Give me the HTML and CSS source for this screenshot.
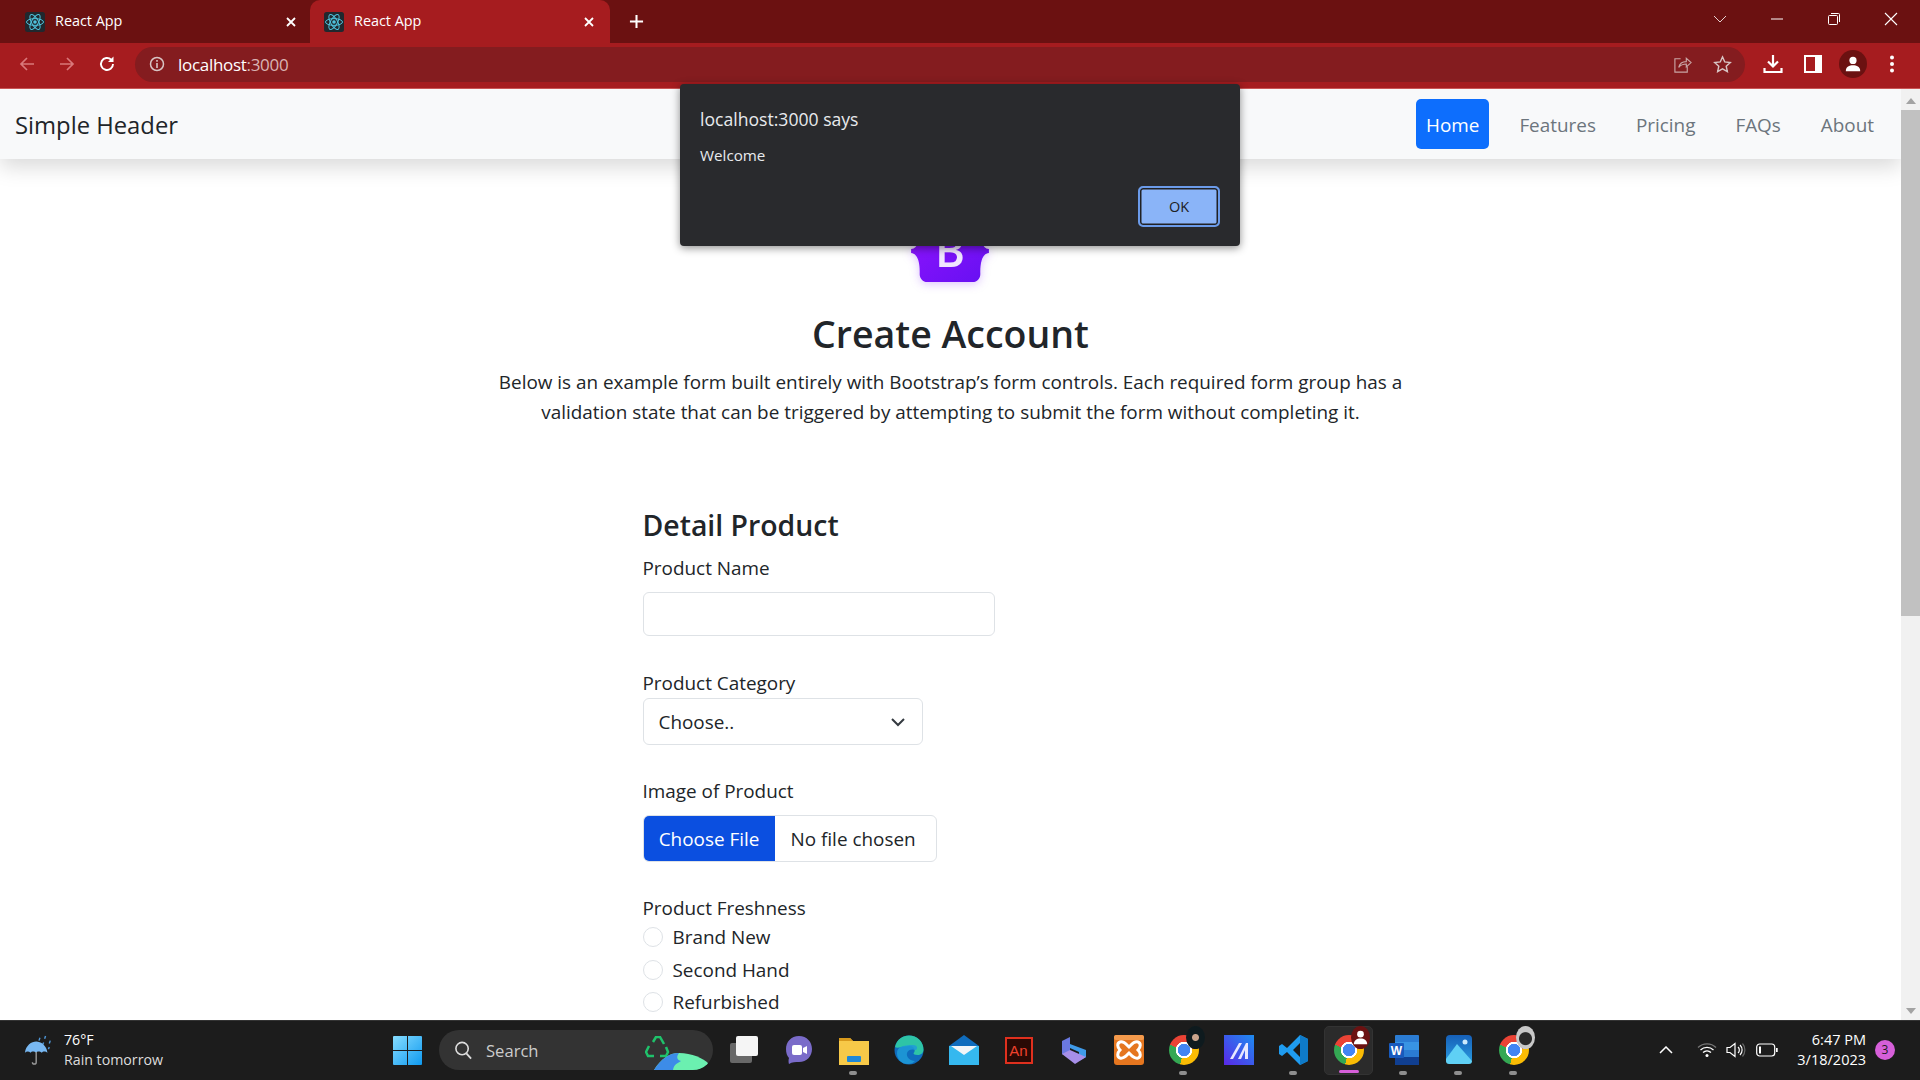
FILE: index.html
```html
<!DOCTYPE html>
<html lang="en">
<head>
    <meta charset="UTF-8">
    <title>React App</title>
    <link rel="stylesheet" href="styles.css">
</head>
<body>
<svg class="defs" width="0" height="0">
    <symbol id="react" viewBox="0 0 20 20">
        <rect width="20" height="20" rx="2.5" fill="#20282e"/>
        <g fill="none" stroke="#4fc3dc" stroke-width="1">
            <ellipse cx="10" cy="10" rx="8.5" ry="3.4"/>
            <ellipse cx="10" cy="10" rx="8.5" ry="3.4" transform="rotate(60 10 10)"/>
            <ellipse cx="10" cy="10" rx="8.5" ry="3.4" transform="rotate(120 10 10)"/>
        </g>
        <circle cx="10" cy="10" r="1.8" fill="#4fc3dc"/>
    </symbol>
    <symbol id="close-x" viewBox="0 0 12 12">
        <path d="M2 2l8 8M10 2l-8 8" stroke="#fff" stroke-width="1.8" fill="none"/>
    </symbol>
</svg>

<div class="tab-strip">
    <div class="tab">
        <svg class="favicon"><use href="#react"/></svg>
        <span class="tab-title">React App</span>
        <svg class="tab-close"><use href="#close-x"/></svg>
    </div>
    <div class="tab tab-active">
        <svg class="favicon"><use href="#react"/></svg>
        <span class="tab-title">React App</span>
        <svg class="tab-close"><use href="#close-x"/></svg>
    </div>
    <svg class="new-tab" viewBox="0 0 16 16"><path d="M8 1v14M1 8h14" stroke="#fff" stroke-width="2.2"/></svg>
    <div class="window-controls">
        <svg viewBox="0 0 14 14"><path d="M1 4l6 6 6-6" stroke="#e6d0d0" fill="none"/></svg>
        <svg viewBox="0 0 14 14"><path d="M1 7h12" stroke="#fff"/></svg>
        <svg viewBox="0 0 14 14"><path d="M1.5 4.5a1 1 0 0 1 1-1h7a1 1 0 0 1 1 1v7a1 1 0 0 1-1 1h-7a1 1 0 0 1-1-1zM4 1.5h7.500a1 1 0 0 1 1 1V10" stroke="#fff" fill="none"/></svg>
        <svg viewBox="0 0 14 14"><path d="M1 1l12 12M13 1L1 13" stroke="#fff" stroke-width="1.100"/></svg>
    </div>
</div>

<div class="toolbar">
    <div class="nav-icons">
        <svg viewBox="0 0 18 18"><path d="M16 9H3M9 3L3 9l6 6" stroke="#d9787a" stroke-width="1.700" fill="none"/></svg>
        <svg viewBox="0 0 18 18"><path d="M2 9h13M9 3l6 6-6 6" stroke="#d9787a" stroke-width="1.700" fill="none"/></svg>
        <svg viewBox="0 0 18 18"><path d="M15 9a6 6 0 1 1-1.800-4.300" stroke="#fff" stroke-width="1.900" fill="none"/><path d="M15.500 1.500v5.500H10z" fill="#fff"/></svg>
    </div>
    <div class="address-bar">
        <svg class="info-icon" viewBox="0 0 16 16"><circle cx="8" cy="8" r="6.500" stroke="#d8c4c4" stroke-width="1.500" fill="none"/><path d="M8 7v5M8 4v1.700" stroke="#d8c4c4" stroke-width="1.600"/></svg>
        <span class="url">localhost<span class="url-port">:3000</span></span>
        <div class="address-actions">
            <svg viewBox="0 0 20 20"><path d="M8 4H2v14h13v-6" stroke="#c9a5a5" stroke-width="1.200" fill="none"/><path d="M6 13c1-4 4-6 8-6V3.500l5 4.500-5 4.500V9.500c-3 0-6 1-8 3.500z" stroke="#c9a5a5" stroke-width="1.200" fill="#841c1f"/></svg>
            <svg viewBox="0 0 20 20"><path d="M10 2l2.400 5.300 5.800.6-4.300 3.900 1.200 5.700L10 14.600l-5.100 2.900 1.200-5.700L1.800 7.900l5.800-.6z" stroke="#d8c4c4" stroke-width="1.500" fill="none"/></svg>
        </div>
    </div>
    <div class="toolbar-icons">
        <svg viewBox="0 0 20 20"><path d="M10 1v11M5 7.500l5 5 5-5" stroke="#fff" stroke-width="2.200" fill="none"/><path d="M1.500 14v4h17v-4" stroke="#fff" stroke-width="2.200" fill="none"/></svg>
        <svg viewBox="0 0 20 20"><rect x="1" y="1" width="18" height="18" fill="#fff"/><rect x="3" y="3" width="9" height="14" fill="#a61c1f"/></svg>
        <div class="avatar">
            <svg viewBox="0 0 20 20"><circle cx="10" cy="6" r="4" fill="#fff"/><path d="M2 18c0-5 4-6.500 8-6.500s8 1.500 8 6.500z" fill="#fff"/></svg>
        </div>
        <svg class="menu-dots" viewBox="0 0 20 20"><circle cx="10" cy="3.500" r="2" fill="#fff"/><circle cx="10" cy="10" r="2" fill="#fff"/><circle cx="10" cy="16.500" r="2" fill="#fff"/></svg>
    </div>
</div>

<div class="viewport">
    <div class="page">
        <nav class="navbar">
            <span class="brand">Simple Header</span>
            <ul class="nav-links">
                <li class="nav-link nav-link-active">Home</li>
                <li class="nav-link">Features</li>
                <li class="nav-link">Pricing</li>
                <li class="nav-link">FAQs</li>
                <li class="nav-link">About</li>
            </ul>
        </nav>

        <header class="hero">
            <svg class="logo" viewBox="0 0 512 408">
                <defs>
                    <linearGradient id="logo-fill" x1="0" y1="0" x2="1" y2="1">
                        <stop offset="0" stop-color="#9013fe"/>
                        <stop offset="1" stop-color="#6610f2"/>
                    </linearGradient>
                </defs>
                <path fill="url(#logo-fill)" d="M106.300 0C77.100 0 55.500 25.600 56.500 53.300c.9 26.600-.3 61.100-9 89.300C38.800 170.800 24.200 188.600 0 190.900v25.900c24.200 2.300 38.800 20.200 47.500 48.300 8.700 28.100 9.900 62.600 9 89.300-1 27.700 20.600 53.300 49.800 53.300h299.400c29.200 0 50.800-25.600 49.800-53.300-.9-26.700.3-61.200 9-89.300 8.700-28.100 23.300-46 47.500-48.300v-25.900c-24.200-2.300-38.800-20.100-47.500-48.300-8.700-28.200-9.900-62.700-9-89.300C456.500 25.600 434.900 0 405.700 0z"/>
                <text class="logo-letter" x="256" y="312" text-anchor="middle">B</text>
            </svg>
            <h1 class="hero-title">Create Account</h1>
            <p class="hero-text">Below is an example form built entirely with Bootstrap’s form controls. Each required form group has a validation state that can be triggered by attempting to submit the form without completing it.</p>
        </header>

        <form class="product-form">
            <h2 class="form-title">Detail Product</h2>

            <label class="form-label">Product Name</label>
            <div class="form-input"></div>

            <label class="form-label label-category">Product Category</label>
            <div class="form-select">
                <span>Choose..</span>
                <svg viewBox="0 0 16 16"><path d="M2 5l6 6 6-6" stroke="#343a40" stroke-width="2" fill="none"/></svg>
            </div>

            <label class="form-label label-image">Image of Product</label>
            <div class="form-file">
                <span class="file-button">Choose File</span>
                <span class="file-name">No file chosen</span>
            </div>

            <label class="form-label label-fresh">Product Freshness</label>
            <div class="radio-row"><span class="radio"></span><span>Brand New</span></div>
            <div class="radio-row"><span class="radio"></span><span>Second Hand</span></div>
            <div class="radio-row"><span class="radio"></span><span>Refurbished</span></div>
        </form>
    </div>

    <div class="scrollbar">
        <svg class="scroll-arrow" viewBox="0 0 10 6"><path d="M5 0l5 6H0z"/></svg>
        <div class="scroll-track"><div class="scroll-thumb"></div></div>
        <svg class="scroll-arrow" viewBox="0 0 10 6"><path d="M5 6L0 0h10z"/></svg>
    </div>

    <div class="alert-box">
        <div class="alert-title">localhost:3000 says</div>
        <div class="alert-text">Welcome</div>
        <div class="alert-actions"><span class="alert-ok">OK</span></div>
    </div>
</div>

<div class="taskbar">
    <div class="weather">
        <svg viewBox="0 0 32 36">
            <path d="M17 5l-1 3M23 3l-1 3M28 8l-1 3M21 10l-1 2M27 15l-1 2" stroke="#4f97d8" stroke-width="1.500"/>
            <path d="M1 21C2 13 8 9 13 9s11 4 12 12c-2-2-5-2-6 0-2-2-5-2-6 0-2-2-5-2-6 0-2-2-4-2-6 0z" fill="#78b8f2"/>
            <path d="M13 20v11a2 2 0 0 1-4 0" stroke="#9a9a9a" stroke-width="1.500" fill="none"/>
        </svg>
        <div class="weather-text">
            <div class="weather-temp">76°F</div>
            <div>Rain tomorrow</div>
        </div>
    </div>

    <div class="start-item">
        <svg class="start-icon" viewBox="0 0 29 29">
            <defs>
                <linearGradient id="win-fill" x1="0" y1="0" x2="1" y2="1">
                    <stop offset="0" stop-color="#86dcff"/>
                    <stop offset="1" stop-color="#0f9af0"/>
                </linearGradient>
            </defs>
            <path fill="url(#win-fill)" d="M0 1a1 1 0 0 1 1-1h13v14H0zM15 0h13a1 1 0 0 1 1 1v13H15zM0 15h14v14H1a1 1 0 0 1-1-1zM15 15h14v13a1 1 0 0 1-1 1H15z"/>
        </svg>
    </div>

    <div class="search-box">
        <svg class="search-glass" viewBox="0 0 20 20"><circle cx="8.500" cy="8.500" r="6.500" stroke="#ddd" stroke-width="1.700" fill="none"/><path d="M13 13.500l5 5.500" stroke="#ddd" stroke-width="1.900"/></svg>
        <span class="search-label">Search</span>
        <svg class="search-art" viewBox="0 0 64 34">
            <path d="M8 6l3-5 4 0 4 7M21 11l2 5-2 4h-6M9 20H3l-2-4 3-6" fill="none" stroke="#1fc26b" stroke-width="2.500"/>
            <path d="M9 34C16 23 24 17 34 17c13 0 24 5 30 11l-9 6z" fill="#6bf0b0"/>
            <path d="M9 34C16 23 24 17 34 17c-3 4-2 7 2 8-3 2-7 3-8 9z" fill="#3d8ce8"/>
        </svg>
    </div>

    <div class="task-items">
        <div class="task-item">
            <svg viewBox="0 0 30 30"><rect x="1" y="8" width="22" height="20" rx="2" fill="#a8a8a8" opacity=".55"/><rect x="7" y="1" width="22" height="20" rx="2" fill="#f5f5f5"/></svg>
        </div>
        <div class="task-item">
            <svg viewBox="0 0 30 30"><path d="M15 1c8 0 13 6 13 13s-5 13-13 13c-3 0-7 0-10 2 0 0-1-3 0-6-2-2-3-5-3-9C2 7 7 1 15 1z" fill="#7a6bc9"/><rect x="8" y="10" width="10" height="10" rx="2" fill="#fff"/><path d="M19 13l4-2v8l-4-2z" fill="#fff"/></svg>
        </div>
        <div class="task-item task-running">
            <svg viewBox="0 0 30 30"><path d="M0 3h11l3 3h16v24H0z" fill="#f7c948"/><path d="M0 3h11l3 3H0z" fill="#d99a1c"/><rect x="8" y="21" width="14" height="6" rx="1" fill="#1e88d8"/></svg>
        </div>
        <div class="task-item">
            <svg viewBox="0 0 30 30">
                <circle cx="15" cy="15" r="14.500" fill="#0f6cbd"/>
                <path d="M1 12C3 4 9 .500 15 .500c8 0 14.500 6 14.500 14 0 3-2 5.500-6 5.500-3 0-4-1-4-2 2-1 2-7-4-7-7 0-12 3-14.500 1z" fill="#2ec4a6"/>
                <path d="M19 10c4 0 5 3 3 5-3-1-8-1-9 3-1 4 3 8 8 8-2 2-4 3-7 3C7 29 3 24 3 18s6-8 16-8z" fill="#1f9bd8" opacity=".85"/>
            </svg>
        </div>
        <div class="task-item">
            <svg viewBox="0 0 30 30"><path d="M15 0l15 11v19H0V11z" fill="#0f6cbd"/><rect y="11" width="30" height="19" fill="#35b8ef"/><path d="M2 11h26L15 20z" fill="#f1f5f8"/></svg>
        </div>
        <div class="task-item">
            <div class="an-icon">An</div>
        </div>
        <div class="task-item">
            <svg viewBox="0 0 30 30"><path d="M3 6l8-4v21l-8-4z" fill="#6a78e0"/><path d="M11 9l16 6v7l-7 4v-9l-9-4z" fill="#3f9ae8"/><path d="M3 19l8-4 16 7-11 7z" fill="#a78fe8"/></svg>
        </div>
        <div class="task-item">
            <svg viewBox="0 0 30 30"><rect width="30" height="30" rx="3" fill="#e5761f"/><rect width="30" height="5" rx="2" fill="#f49a4c"/><path d="M6 7c4-1 6 2 9 5 3-3 5-6 9-5 3 1 3 5 0 8 3 3 3 7 0 8-4 1-6-2-9-5-3 3-5 6-9 5-3-1-3-5 0-8-3-3-3-7 0-8z" fill="none" stroke="#fff" stroke-width="3"/></svg>
        </div>
        <div class="task-item task-running">
            <div class="chrome"><span class="chrome-badge badge-dark"></span></div>
        </div>
        <div class="task-item">
            <svg viewBox="0 0 30 30"><defs><linearGradient id="m-fill" x1="1" y1="0" x2="0" y2="1"><stop offset="0" stop-color="#1d8cf0"/><stop offset="1" stop-color="#5a28e8"/></linearGradient></defs><rect width="30" height="30" fill="url(#m-fill)"/><path d="M6 24L15 8h3L9 24zM14 24l8-16h2v16h-3v-9l-4 9z" fill="#e8e8ff"/></svg>
        </div>
        <div class="task-item task-running">
            <svg viewBox="0 0 30 30"><path d="M21 0l8 4v22l-8 4L8 17 3 21l-3-2v-8l3-2 5 4zM21 8l-7 7 7 7z" fill="#1f9cf0"/><path d="M21 0l8 4v22l-8 4z" fill="#0e7ac8"/></svg>
        </div>
        <div class="task-item task-active">
            <div class="chrome"><span class="chrome-badge badge-red"><svg viewBox="0 0 20 20"><circle cx="10" cy="6.500" r="3.500" fill="#fff"/><path d="M3 17c0-4 3-6 7-6s7 2 7 6z" fill="#fff"/></svg></span></div>
        </div>
        <div class="task-item task-running">
            <svg viewBox="0 0 30 30"><rect x="6" width="24" height="30" rx="1" fill="#2b7cd3"/><rect x="6" y="7" width="24" height="8" fill="#41a5ee" opacity=".6"/><rect x="6" y="22" width="24" height="8" fill="#103f91"/><rect y="8" width="15" height="15" rx="1" fill="#185abd"/><text class="word-letter" x="7.500" y="20" text-anchor="middle">W</text></svg>
        </div>
        <div class="task-item task-running">
            <svg viewBox="0 0 30 30"><defs><linearGradient id="ph-fill" x1="0" y1="0" x2="0" y2="1"><stop offset="0" stop-color="#1660b8"/><stop offset="1" stop-color="#2a9be0"/></linearGradient></defs><rect x="2" width="26" height="28" rx="4" fill="url(#ph-fill)"/><circle cx="21" cy="7" r="2.500" fill="#cdeafc"/><path d="M2 24L13 9l15 17v0a3 3 0 0 1-3 3H5a3 3 0 0 1-3-3z" fill="#5fd0f5"/></svg>
        </div>
        <div class="task-item task-running">
            <div class="chrome"><span class="chrome-badge badge-grey"></span></div>
        </div>
    </div>

    <div class="tray">
        <svg class="tray-chevron" viewBox="0 0 14 8"><path d="M1 7l6-6 6 6" stroke="#fff" stroke-width="1.500" fill="none"/></svg>
        <svg class="tray-wifi" viewBox="0 0 20 16"><path d="M1 5.500a13 13 0 0 1 18 0" stroke="#777" stroke-width="1.300" fill="none"/><path d="M3.500 8a9.500 9.500 0 0 1 13 0M6 10.500a6 6 0 0 1 8 0" stroke="#fff" stroke-width="1.300" fill="none"/><circle cx="10" cy="13.500" r="1.500" fill="#fff"/></svg>
        <svg class="tray-sound" viewBox="0 0 20 16"><path d="M1 5.500h3L9 1.500v13l-5-4H1z" stroke="#fff" stroke-width="1.200" fill="none"/><path d="M12 5a4 4 0 0 1 0 6M14 3a7 7 0 0 1 0 10" stroke="#fff" stroke-width="1.200" fill="none"/><path d="M16.500 1.500a10 10 0 0 1 0 13" stroke="#666" stroke-width="1.200" fill="none"/></svg>
        <svg class="tray-battery" viewBox="0 0 22 14"><rect x=".700" y="1" width="18" height="12" rx="3" stroke="#fff" stroke-width="1.200" fill="none"/><rect x="3" y="3.500" width="2" height="7" fill="#fff"/><rect x="20" y="5" width="1.700" height="4" fill="#fff"/></svg>
        <div class="clock">
            <div>6:47 PM</div>
            <div>3/18/2023</div>
        </div>
        <span class="notify-badge">3</span>
    </div>
</div>
</body>
</html>
```

FILE: styles.css
```css
* {
    box-sizing: border-box;
}
html, body {
    margin: 0;
    height: 100%;
    overflow: hidden;
}
body {
    display: flex;
    flex-direction: column;
    height: 1080px;
    font-family: "Open Sans", "Liberation Sans", sans-serif;
    color: #212529;
    background: #fff;
}
.defs {
    display: block;
    height: 0;
}

/* browser chrome */
.tab-strip {
    display: flex;
    align-items: center;
    height: 43px;
    background: #6b1111;
    padding-left: 10px;
    color: #fff;
}
.tab {
    display: flex;
    align-items: center;
    width: 299px;
    height: 43px;
    padding: 0 12px 0 15px;
    flex: none;
}
.tab-active {
    width: 300px;
    background: #a61c1f;
    border-radius: 10px 10px 0 0;
    padding: 0 15px 0 14px;
    margin-left: 1px;
}
.favicon {
    width: 20px;
    height: 20px;
    flex: none;
}
.tab-title {
    font-size: 14.400px;
    margin: -3px 0 0 10px;
    flex: 1;
}
.tab-close {
    width: 12px;
    height: 12px;
    flex: none;
}
.new-tab {
    width: 15px;
    height: 15px;
    margin-left: 19px;
}
.window-controls {
    display: flex;
    align-items: center;
    gap: 43px;
    margin-left: auto;
    margin-right: 22px;
    margin-top: -6px;
}
.window-controls svg {
    width: 14px;
    height: 14px;
}

.toolbar {
    display: flex;
    align-items: center;
    height: 46px;
    background: #a61c1f;
    border-bottom: 1px solid #c95555;
    padding-left: 18px;
    padding-bottom: 3px;
}
.nav-icons {
    display: flex;
    gap: 22px;
    width: 117px;
}
.nav-icons svg {
    width: 18px;
    height: 18px;
}
.address-bar {
    display: flex;
    align-items: center;
    width: 1610px;
    height: 35px;
    background: #841c1f;
    border-radius: 18px;
    padding-left: 14px;
    color: #fff;
}
.info-icon {
    width: 16px;
    height: 16px;
}
.url {
    font-size: 17px;
    margin-left: 13px;
    letter-spacing: -0.3px;
}
.url-port {
    color: #d9b3b3;
}
.address-actions {
    display: flex;
    align-items: center;
    gap: 21px;
    margin-left: auto;
    margin-right: 13px;
}
.address-actions svg {
    width: 19px;
    height: 19px;
}
.toolbar-icons {
    display: flex;
    align-items: center;
    gap: 20px;
    margin-left: 18px;
}
.toolbar-icons > svg {
    width: 20px;
    height: 20px;
}
.toolbar-icons .menu-dots {
    margin-left: -1px;
}
.avatar {
    display: flex;
    align-items: center;
    justify-content: center;
    width: 28px;
    height: 28px;
    margin: 0 -4px;
    border-radius: 50%;
    background: #6b1111;
}
.avatar svg {
    width: 18px;
    height: 18px;
}

/* page */
.viewport {
    position: relative;
    display: flex;
    height: 931px;
}
.page {
    flex: 1;
    overflow: hidden;
}
.navbar {
    display: flex;
    align-items: center;
    justify-content: space-between;
    height: 70px;
    padding: 0 17px 0 15px;
    background: #f8f9fa;
    box-shadow: 0 8px 20px rgba(0, 0, 0, 0.15);
}
.brand {
    font-size: 23.800px;
    padding-top: 1px;
}
.nav-links {
    display: flex;
    gap: 20px;
    list-style: none;
    margin: 0;
    padding: 0;
}
.nav-link {
    display: flex;
    align-items: center;
    height: 50px;
    padding: 1px 10px 0;
    font-size: 18.900px;
    color: #6c757d;
    border-radius: 5px;
}
.nav-link-active {
    background: #0d6efd;
    color: #fff;
}
.hero {
    display: flex;
    flex-direction: column;
    align-items: center;
    padding-top: 61px;
}
.logo {
    width: 78px;
    height: 62px;
    margin-right: 2px;
    filter: drop-shadow(0 2px 5px rgba(116, 16, 247, 0.25));
}
.logo-letter {
    font-size: 300px;
    font-weight: 600;
    fill: #f0e6ff;
}
.hero-title {
    margin: 28px 0 9px;
    font-size: 37.500px;
    font-weight: 600;
    line-height: 48px;
}
.hero-text {
    width: 920px;
    margin: 0;
    font-size: 18.900px;
    line-height: 30px;
    text-align: center;
}
.product-form {
    display: flex;
    flex-direction: column;
    align-items: flex-start;
    width: 616px;
    margin: 80px auto 0;
    font-size: 18.900px;
    line-height: 30px;
}
.form-title {
    margin: 0 0 10px;
    font-size: 28.400px;
    font-weight: 600;
    line-height: 36px;
}
.form-label {
    display: block;
}
.form-input {
    width: 352px;
    height: 44px;
    margin-top: 9px;
    border: 1px solid #dee2e6;
    border-radius: 6px;
}
.label-category {
    margin-top: 32px;
}
.form-select {
    display: flex;
    align-items: center;
    justify-content: space-between;
    width: 280px;
    height: 47px;
    padding: 0 16px 0 15px;
    border: 1px solid #dee2e6;
    border-radius: 6px;
}
.form-select svg {
    width: 16px;
    height: 16px;
}
.label-image {
    margin-top: 31px;
}
.form-file {
    display: flex;
    width: 294px;
    height: 47px;
    margin-top: 9px;
    border: 1px solid #dee2e6;
    border-radius: 6px;
    overflow: hidden;
}
.file-button {
    display: flex;
    align-items: center;
    justify-content: center;
    width: 131px;
    background: #0b4fe0;
    color: #fff;
}
.file-name {
    display: flex;
    align-items: center;
    padding-left: 16px;
}
.label-fresh {
    margin-top: 31px;
    margin-bottom: -2px;
}
.radio-row {
    display: flex;
    align-items: center;
    gap: 10px;
    height: 32.500px;
}
.radio {
    width: 20px;
    height: 20px;
    border: 1px solid #dee2e6;
    border-radius: 50%;
}

.scrollbar {
    display: flex;
    flex-direction: column;
    align-items: center;
    width: 19px;
    background: #f1f1f1;
}
.scroll-arrow {
    width: 10px;
    height: 6px;
    margin: 9px 0 6px;
    fill: #a3a3a3;
}
.scroll-track {
    flex: 1;
    width: 100%;
}
.scroll-thumb {
    width: 100%;
    height: 506px;
    background: #c1c1c1;
}

.alert-box {
    position: absolute;
    top: -5px;
    left: 680px;
    width: 560px;
    height: 162px;
    padding: 23px 20px 0;
    background: #292a2d;
    border-radius: 4px;
    box-shadow: 0 2px 8px rgba(0, 0, 0, 0.45);
    color: #e8eaed;
}
.alert-title {
    font-size: 17.600px;
    line-height: 24px;
}
.alert-text {
    margin-top: 14px;
    font-size: 15.200px;
    line-height: 20px;
}
.alert-actions {
    display: flex;
    justify-content: flex-end;
    margin-top: 21px;
}
.alert-ok {
    display: flex;
    align-items: center;
    justify-content: center;
    width: 82px;
    height: 41px;
    background: #8ab4f8;
    border: 2px solid #6b9bea;
    border-radius: 5px;
    box-shadow: inset 0 0 0 1.500px #202124;
    font-size: 14.500px;
    color: #202124;
}

/* taskbar */
.taskbar {
    display: flex;
    align-items: center;
    height: 60px;
    padding-bottom: 1px;
    background: #1c1c1c;
    border-top: 1px solid #333;
    color: #fff;
    flex: none;
}
.weather {
    display: flex;
    align-items: center;
    gap: 12px;
    width: 380px;
    padding-left: 24px;
    font-size: 14.200px;
    line-height: 20px;
    color: #ddd;
}
.weather svg {
    width: 30px;
    height: 36px;
    margin-right: -2px;
}
.weather-temp {
    color: #fff;
}
.start-item {
    display: flex;
    align-items: center;
    justify-content: center;
    width: 54px;
}
.start-icon {
    width: 29px;
    height: 29px;
}
.search-box {
    display: flex;
    align-items: center;
    width: 274px;
    height: 40px;
    margin-left: 5px;
    padding-left: 15px;
    background: #333;
    border-radius: 20px;
    font-size: 16.600px;
    color: #ccc;
    overflow: hidden;
}
.search-glass {
    width: 19px;
    height: 20px;
}
.search-label {
    margin-left: 13px;
}
.search-art {
    width: 64px;
    height: 34px;
    margin-left: auto;
    margin-right: 4px;
    align-self: flex-end;
}
.task-items {
    display: flex;
    gap: 6px;
    margin-left: 6px;
}
.task-item {
    position: relative;
    display: flex;
    align-items: center;
    justify-content: center;
    width: 49px;
    height: 49px;
}
.task-item > svg {
    width: 30px;
    height: 30px;
}
.task-running:after {
    content: " ";
    position: absolute;
    bottom: 0;
    left: 20px;
    width: 8px;
    height: 4px;
    border-radius: 2px;
    background: #8f8f8f;
}
.task-active {
    background: #2b2b2b;
    border: 1px solid #333;
    border-radius: 5px;
}
.task-active:after {
    content: " ";
    position: absolute;
    bottom: 1px;
    left: 14px;
    width: 20px;
    height: 3px;
    border-radius: 2px;
    background: #d65fd9;
}
.an-icon {
    width: 28px;
    height: 27px;
    border: 2px solid #e0301e;
    background: #2a0a05;
    color: #f0412c;
    font-family: "Liberation Sans", sans-serif;
    font-size: 15px;
    line-height: 23px;
    text-align: center;
}
.chrome {
    position: relative;
    width: 30px;
    height: 30px;
    border-radius: 50%;
    background: radial-gradient(circle, #4285f4 0 6px, #fff 6.500px 8px, transparent 8.500px),
        conic-gradient(#ea4335 0 80deg, #fbbc04 80deg 195deg, #34a853 195deg 290deg, #ea4335 290deg);
}
.chrome-badge {
    position: absolute;
    top: -9px;
    right: -6px;
    display: block;
    width: 19px;
    height: 23px;
    border-radius: 50%;
}
.chrome-badge svg {
    display: block;
    width: 19px;
    height: 23px;
}
.badge-dark {
    background: radial-gradient(circle at 50% 50%, #c9a48c 0 3px, #0e1a1e 4px);
}
.badge-red {
    background: #6b1111;
}
.badge-grey {
    background: radial-gradient(circle at 50% 55%, #2a2a2a 0 6px, #c8c8c8 7px);
}
.word-letter {
    font-family: "Liberation Sans", sans-serif;
    font-size: 12px;
    font-weight: 700;
    fill: #fff;
}
.tray {
    position: relative;
    display: flex;
    align-items: center;
    flex: 1;
    height: 100%;
    margin-left: 0;
}
.tray-chevron {
    width: 14px;
    height: 8px;
    margin-left: 121px;
}
.tray-wifi {
    width: 20px;
    height: 16px;
    margin-left: 24px;
}
.tray-sound {
    width: 20px;
    height: 16px;
    margin-left: 9px;
}
.tray-battery {
    width: 22px;
    height: 14px;
    margin-left: 10px;
}
.clock {
    margin-left: auto;
    margin-right: 9px;
    font-size: 14.500px;
    line-height: 20px;
    text-align: right;
}
.notify-badge {
    width: 20px;
    height: 20px;
    margin-right: 25px;
    border-radius: 50%;
    background: #d65fd9;
    color: #1c1c1c;
    font-size: 12px;
    line-height: 20px;
    text-align: center;
}
```
